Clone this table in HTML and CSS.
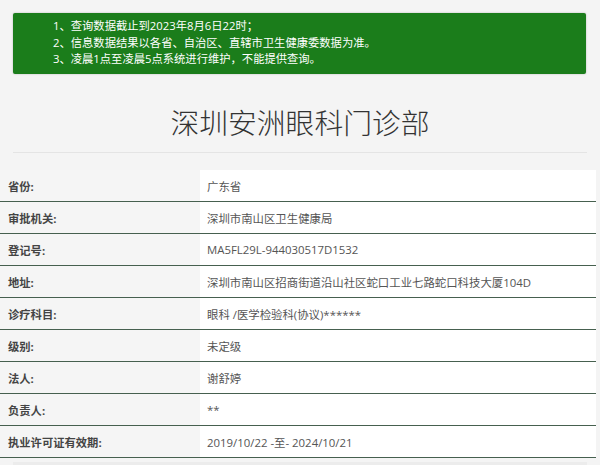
FILE: index.html
```html
<!DOCTYPE html>
<html lang="zh-CN">
<head>
<meta charset="utf-8">
<title>深圳安洲眼科门诊部</title>
<link rel="stylesheet" href="styles.css">
</head>
<body>
<div class="notice">
  <p>1、查询数据截止到2023年8月6日22时；</p>
  <p>2、信息数据结果以各省、自治区、直辖市卫生健康委数据为准。</p>
  <p>3、凌晨1点至凌晨5点系统进行维护，不能提供查询。</p>
</div>
<h1 class="title">深圳安洲眼科门诊部</h1>
<div class="divider"></div>
<table class="info">
  <tr><th>省份:</th><td>广东省</td></tr>
  <tr><th>审批机关:</th><td>深圳市南山区卫生健康局</td></tr>
  <tr><th>登记号:</th><td>MA5FL29L-944030517D1532</td></tr>
  <tr><th>地址:</th><td>深圳市南山区招商街道沿山社区蛇口工业七路蛇口科技大厦104D</td></tr>
  <tr><th>诊疗科目:</th><td>眼科 /医学检验科(协议)******</td></tr>
  <tr><th>级别:</th><td>未定级</td></tr>
  <tr><th>法人:</th><td>谢舒婷</td></tr>
  <tr><th>负责人:</th><td>**</td></tr>
  <tr><th>执业许可证有效期:</th><td>2019/10/22 -至- 2024/10/21</td></tr>
</table>
<div class="next"></div>
</body>
</html>
```
FILE: styles.css
```css
html, body {
  margin: 0;
  padding: 0;
  background: #f4f4f4;
  font-family: "Open Sans", "Noto Sans CJK SC", sans-serif;
  color: #333;
  overflow: hidden;
}
.notice {
  margin: 13px 14px 0 13px;
  height: 61px;
  box-sizing: border-box;
  background: #1b7d1b;
  border-radius: 2px;
  padding: 5px 0 0 40px;
  color: #fff;
  font-size: 11.3px;
  line-height: 16.5px;
  box-shadow: 0 0 2px rgba(0,0,0,0.25);
}
.notice p { margin: 0; }
.title {
  margin: 0;
  padding-top: 28px;
  height: 50px;
  text-align: center;
  font-family: "Noto Sans CJK SC", sans-serif;
  font-size: 28.8px;
  line-height: 40px;
  font-weight: 300;
  color: #333;
}
.divider {
  margin: 0 13px;
  border-top: 1px solid #e4e4e4;
}
.info {
  margin-top: 17px;
  width: 596px;
  border-collapse: collapse;
  font-size: 11.3px;
}
.info th, .info td {
  height: 31px;
  padding: 0;
  border-bottom: 1px solid #46604f;
  text-align: left;
  vertical-align: middle;
}
.info th {
  width: 200px;
  padding-left: 8px;
  box-sizing: border-box;
  background: #f5f5f5;
  font-weight: 700;
  color: #444;
}
.info td {
  padding-left: 7px;
  background: #fff;
  color: #555;
  font-size: 11.4px;
}
.next {
  margin: 4px 13px 0 13px;
  height: 20px;
  background: #ececec;
}
```
